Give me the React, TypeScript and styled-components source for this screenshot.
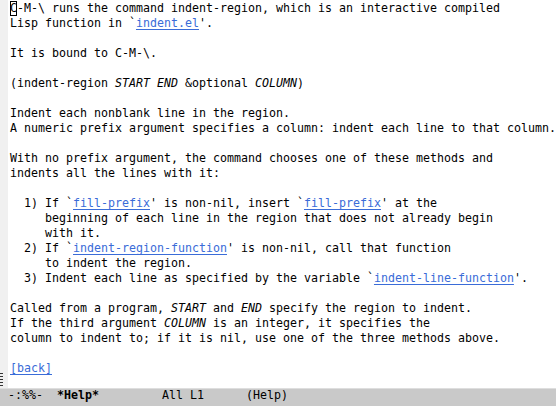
import React from 'react';
import styled, { createGlobalStyle } from 'styled-components';

const Global = createGlobalStyle`
  html, body {
    margin: 0;
    padding: 0;
    background: #fff;
  }
`;

const Frame = styled.div`
  display: flex;
  flex-direction: column;
  width: 556px;
  height: 406px;
  overflow: hidden;
  background: #fff;
  font-family: 'DejaVu Sans Mono', 'Liberation Mono', monospace;
  font-size: 11.63px;
  color: #000;
`;

const Window = styled.div`
  display: flex;
  height: 388px;
  overflow: hidden;
`;

const Fringe = styled.div`
  flex: 0 0 8px;
  background: #f0f0f0;
  display: flex;
  flex-direction: column;
  justify-content: flex-end;
  padding-bottom: 1px;
`;

const Buffer = styled.pre`
  margin: 0;
  padding: 1px 0 0 2px;
  font: inherit;
  line-height: 15px;
  white-space: pre;
  overflow: hidden;
`;

const Cursor = styled.span`
  display: inline-block;
  width: 7px;
  height: 15px;
  vertical-align: top;
  box-shadow: inset 1px 0 0 #000, inset 0 0 0 1px #000;
`;

const Link = styled.span`
  color: #3a6cd8;
  text-decoration: underline;
  text-underline-offset: 2px;
`;

const Arg = styled.i`
  font-style: italic;
`;

const ModeLine = styled.div`
  flex: 0 0 18px;
  box-sizing: border-box;
  padding-left: 8px;
  background: #c9c9c9;
  border-top: 1px solid #dedede;
  line-height: 13px;
  white-space: pre;
`;

const BufferName = styled.b`
  font-weight: bold;
`;

const EmptyLines = () => (
  <svg width="4" height="15" viewBox="0 0 4 15">
    {[1, 4, 7, 10, 13].map((y) => (
      <rect key={y} x="0" y={y} width="3" height="1" fill="#333" />
    ))}
  </svg>
);

const App: React.FC = () => {
  return (
    <Frame>
      <Global />
      <Window>
        <Fringe>
          <EmptyLines />
        </Fringe>
        <Buffer>
          <Cursor>C</Cursor>-M-\ runs the command indent-region, which is an interactive compiled{'\n'}
          Lisp function in `<Link>indent.el</Link>'.{'\n'}
          {'\n'}
          It is bound to C-M-\.{'\n'}
          {'\n'}
          (indent-region <Arg>START</Arg> <Arg>END</Arg> &amp;optional <Arg>COLUMN</Arg>){'\n'}
          {'\n'}
          Indent each nonblank line in the region.{'\n'}
          A numeric prefix argument specifies a column: indent each line to that column.{'\n'}
          {'\n'}
          With no prefix argument, the command chooses one of these methods and{'\n'}
          indents all the lines with it:{'\n'}
          {'\n'}
          {'  1) If `'}<Link>fill-prefix</Link>' is non-nil, insert `<Link>fill-prefix</Link>' at the{'\n'}
          {'     beginning of each line in the region that does not already begin'}{'\n'}
          {'     with it.'}{'\n'}
          {'  2) If `'}<Link>indent-region-function</Link>' is non-nil, call that function{'\n'}
          {'     to indent the region.'}{'\n'}
          {'  3) Indent each line as specified by the variable `'}<Link>indent-line-function</Link>'.{'\n'}
          {'\n'}
          Called from a program, <Arg>START</Arg> and <Arg>END</Arg> specify the region to indent.{'\n'}
          If the third argument <Arg>COLUMN</Arg> is an integer, it specifies the{'\n'}
          column to indent to; if it is nil, use one of the three methods above.{'\n'}
          {'\n'}
          <Link>[back]</Link>
        </Buffer>
      </Window>
      <ModeLine>
        {'-:%%-  '}<BufferName>*Help*</BufferName>{'         All L1      (Help)'}
      </ModeLine>
    </Frame>
  );
};

export default App;
